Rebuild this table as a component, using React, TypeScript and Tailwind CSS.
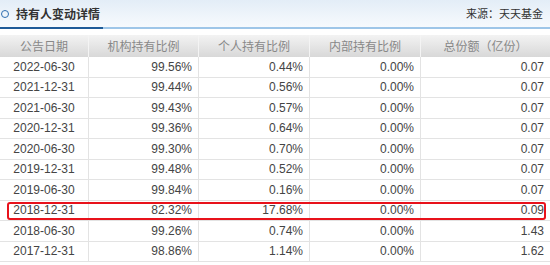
import React from "react";

type Row = {
  date: string;
  org: string;
  person: string;
  inner: string;
  total: string;
  mark?: boolean;
};

const ROWS: Row[] = [
  { date: "2022-06-30", org: "99.56%", person: "0.44%", inner: "0.00%", total: "0.07" },
  { date: "2021-12-31", org: "99.44%", person: "0.56%", inner: "0.00%", total: "0.07" },
  { date: "2021-06-30", org: "99.43%", person: "0.57%", inner: "0.00%", total: "0.07" },
  { date: "2020-12-31", org: "99.36%", person: "0.64%", inner: "0.00%", total: "0.07" },
  { date: "2020-06-30", org: "99.30%", person: "0.70%", inner: "0.00%", total: "0.07" },
  { date: "2019-12-31", org: "99.48%", person: "0.52%", inner: "0.00%", total: "0.07" },
  { date: "2019-06-30", org: "99.84%", person: "0.16%", inner: "0.00%", total: "0.07" },
  { date: "2018-12-31", org: "82.32%", person: "17.68%", inner: "0.00%", total: "0.09", mark: true },
  { date: "2018-06-30", org: "99.26%", person: "0.74%", inner: "0.00%", total: "1.43" },
  { date: "2017-12-31", org: "98.86%", person: "1.14%", inner: "0.00%", total: "1.62" },
];

const COLS = "grid grid-cols-[88px_110px_111px_111px_1fr]";
const HEADS = ["公告日期", "机构持有比例", "个人持有比例", "内部持有比例", "总份额（亿份）"];

export default function App() {
  return (
    <div className="w-[550px] h-[265px] overflow-hidden bg-white font-['Liberation_Sans','Noto_Sans_CJK_SC',sans-serif]">
      {/* 标题栏 */}
      <div className="h-[27px] flex items-center justify-between bg-gradient-to-b from-[#e3edf7] to-[#f7fafd] pl-[1px] pr-[7px]">
        <div className="flex items-center gap-[7px]">
          <span className="w-[8px] h-[8px] rounded-full border-[1.5px] border-[#2e6db0]" />
          <span className="text-[12px] font-bold text-[#333] font-['Noto_Sans_CJK_SC',sans-serif]">持有人变动详情</span>
        </div>
        <span className="text-[11px] text-[#333] font-['Noto_Sans_CJK_SC',sans-serif]">来源：天天基金</span>
      </div>
      <div className="flex h-[2px]">
        <div className="w-[103px] bg-[#1f5b98]" />
        <div className="flex-1 bg-[#9fc6e8]" />
      </div>

      <div className="mt-[6px]">
        <div className={`${COLS} h-[22px] bg-gradient-to-b from-[#f3f3f3] to-[#d8d8d8] text-[12px] text-[#888] font-['Noto_Sans_CJK_SC',sans-serif]`}>
          {HEADS.map((h, i) => (
            <div key={h} className={`flex items-center justify-center ${i > 0 ? "border-l border-[#f4f4f4]" : ""}`}>
              {h}
            </div>
          ))}
        </div>

        {ROWS.map((r) => (
          <div key={r.date} className={`${COLS} relative h-[20.5px] border-b border-[#e3e3e3] text-[12px] text-[#444]`}>
            <div className="flex items-center justify-center">{r.date}</div>
            <div className="flex items-center justify-end pr-[6px] border-l border-[#e3e3e3]">{r.org}</div>
            <div className="flex items-center justify-end pr-[6px] border-l border-[#e3e3e3]">{r.person}</div>
            <div className="flex items-center justify-end pr-[6px] border-l border-[#e3e3e3]">{r.inner}</div>
            <div className="flex items-center justify-end pr-[6px] border-l border-[#e3e3e3]">{r.total}</div>
            {r.mark && (
              <div className="absolute left-[7px] right-[4px] top-[1px] bottom-[0px] border-2 border-[#e8121b] rounded-[3px]" />
            )}
          </div>
        ))}
      </div>
    </div>
  );
}
